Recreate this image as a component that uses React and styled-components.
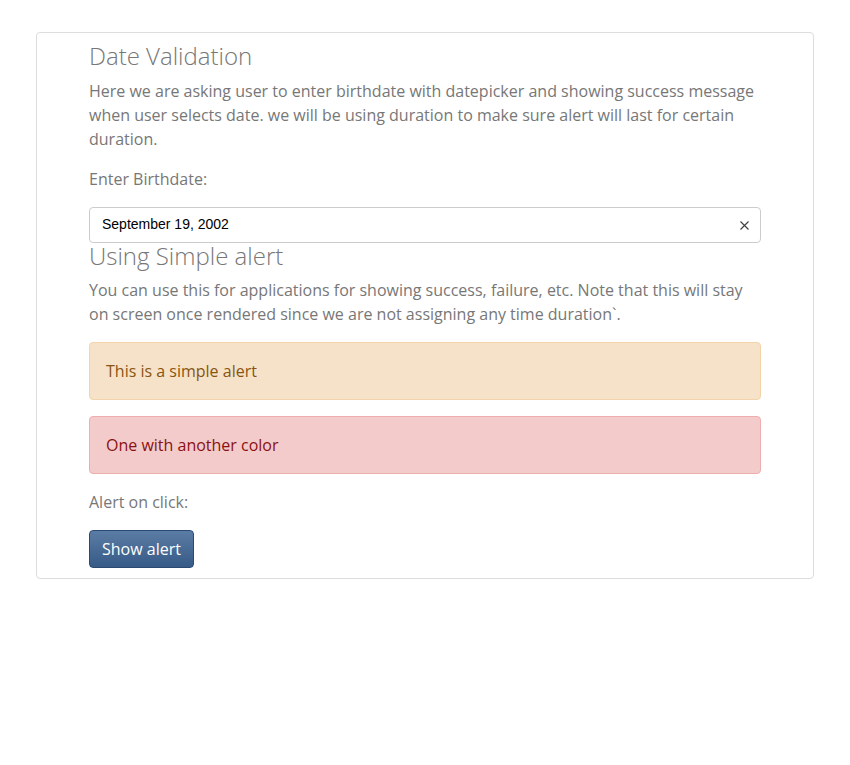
import React, { useState } from "react";
import styled, { createGlobalStyle } from "styled-components";

const GlobalStyle = createGlobalStyle`
  body {
    margin: 8px;
    background: #fff;
    font-family: "Open Sans", "Liberation Sans", sans-serif;
    color: #777;
  }
`;

// 바깥 카드
const Card = styled.div`
  margin: 24px 28px;
  border: 1px solid #ddd;
  border-radius: 4px;
  padding: 10px 52px 10px;
`;

const Title = styled.h3`
  margin: 0 0 ${(p) => p.$gap || 10}px;
  font-size: 24px;
  font-weight: 300;
  line-height: 26px;
  color: #777;
`;

const Text = styled.p`
  margin: 0 0 16px;
  font-size: 16px;
  line-height: 24px;
`;

const InputWrap = styled.div`
  position: relative;
  height: 36px;
  box-sizing: border-box;
  border: 1px solid #ccc;
  border-radius: 4px;
  display: flex;
  align-items: center;
`;

const DateInput = styled.input`
  flex: 1;
  border: none;
  outline: none;
  background: transparent;
  padding: 0 12px 2px;
  font-family: "Liberation Sans", Arial, sans-serif;
  font-size: 14px;
  color: #000;
  height: 100%;
  box-sizing: border-box;
`;

const ClearButton = styled.button`
  border: none;
  background: none;
  padding: 0 11px 0 0;
  display: flex;
  align-items: center;
  cursor: pointer;
`;

const Alert = styled.div`
  margin-bottom: 16px;
  padding: 16px;
  border: 1px solid ${(p) => (p.$kind === "danger" ? "#eeaeae" : "#f2d3aa")};
  border-radius: 4px;
  background: ${(p) => (p.$kind === "danger" ? "#f3cbcb" : "#f5e2c9")};
  color: ${(p) => (p.$kind === "danger" ? "#8a1111" : "#8a5410")};
  font-size: 16px;
  line-height: 24px;
`;

const Button = styled.button`
  display: block;
  height: 38px;
  padding: 0 12px;
  border: 1px solid #2a4a72;
  border-radius: 4px;
  background: linear-gradient(to bottom, #5b7ca4 0%, #365b87 100%);
  color: #fff;
  font-family: "Open Sans", "Liberation Sans", sans-serif;
  font-size: 16px;
  line-height: 24px;
  cursor: pointer;
`;

const App = () => {
  const [date, setDate] = useState("September 19, 2002");

  return (
    <>
      <GlobalStyle />
      <Card>
        <Title>Date Validation</Title>
        <Text>
          Here we are asking user to enter birthdate with datepicker and
          showing success message when user selects date. we will be using
          duration to make sure alert will last for certain duration.
        </Text>
        <Text>Enter Birthdate:</Text>
        <InputWrap>
          <DateInput value={date} onChange={(e) => setDate(e.target.value)} />
          <ClearButton onClick={() => setDate("")} aria-label="clear">
            <svg width="9" height="9" viewBox="0 0 9 9">
              <path
                d="M0.5 0.5 L8.5 8.5 M8.5 0.5 L0.5 8.5"
                stroke="#444"
                strokeWidth="1.2"
                fill="none"
              />
            </svg>
          </ClearButton>
        </InputWrap>
        <Title $gap={9}>Using Simple alert</Title>
        <Text>
          You can use this for applications for showing success, failure, etc.
          Note that this will stay on screen once rendered since we are not
          assigning any time duration`.
        </Text>
        <Alert $kind="warning">This is a simple alert</Alert>
        <Alert $kind="danger">One with another color</Alert>
        <Text>Alert on click:</Text>
        <Button>Show alert</Button>
      </Card>
    </>
  );
};

export default App;
